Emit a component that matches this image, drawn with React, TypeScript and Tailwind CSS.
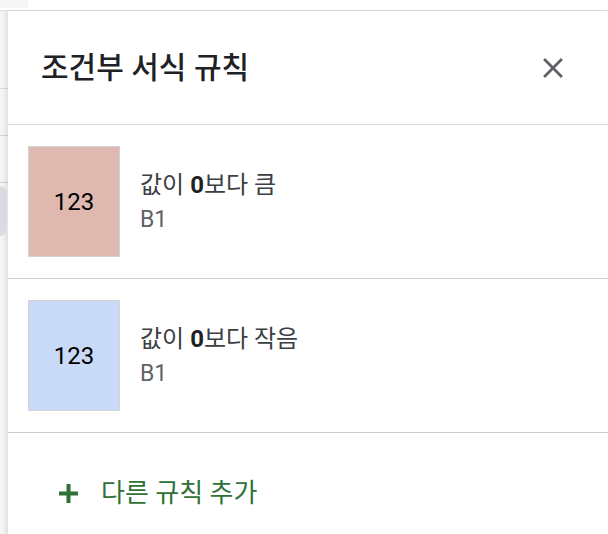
import React from 'react';

const rules = [
  { id: 1, swatch: 'bg-[#dfb9b0]', label: '0보다 큼', range: 'B1' },
  { id: 2, swatch: 'bg-[#c9daf8]', label: '0보다 작음', range: 'B1' },
];

function CloseIcon() {
  return (
    <svg width="34" height="34" viewBox="0 0 24 24" fill="#5f6368" aria-hidden="true">
      <path d="M19 6.41 17.59 5 12 10.59 6.41 5 5 6.41 10.59 12 5 17.59 6.41 19 12 13.41 17.59 19 19 17.59 13.41 12z" />
    </svg>
  );
}

function PlusIcon() {
  return (
    <svg width="19" height="19" viewBox="0 0 19 19" aria-hidden="true">
      <path d="M9.5 0v19M0 9.5h19" stroke="#2f7137" strokeWidth="4" />
    </svg>
  );
}

export default function App() {
  return (
    <div
      className="w-[608px] h-[534px] overflow-hidden bg-white"
      style={{ fontFamily: 'Roboto, "Noto Sans CJK KR", sans-serif' }}
    >
      {/* toolbar remnant */}
      <div className="h-[10px]">
        <div className="w-[28px] h-[8px] bg-[#f6f6f6]" />
      </div>

      <div className="flex border-t border-[#dadce0]">
        {/* sheet strip behind the panel */}
        <div className="w-[8px] shrink-0 bg-gradient-to-r from-[#f7f7f7] to-[#ececec]">
          <div className="h-[78px] border-b border-[#d6d6d6]" />
          <div className="h-[47px] border-b border-[#cfcfcf]" />
          <div className="h-[47px] border-b border-[#cfcfcf]" />
          <div className="mt-[3px] h-[50px] w-[6px] rounded-r-[6px] bg-[#d9dce1]" />
        </div>

        {/* side panel */}
        <div className="flex-1 flex flex-col bg-white shadow-[-2px_0_4px_rgba(0,0,0,0.06)]">
          <div className="h-[114px] flex items-center justify-between pl-[33px] pr-[38px] border-b border-[#dadce0]">
            <h1 className="text-[30px] font-medium text-[#202124]">조건부 서식 규칙</h1>
            <CloseIcon />
          </div>

          {rules.map((rule) => (
            <div
              key={rule.id}
              className="h-[154px] flex items-center gap-[20px] px-[20px] border-b border-[#cccccc]"
            >
              <div
                className={`w-[92px] h-[111px] shrink-0 flex items-center justify-center border border-[#d3d3d3] ${rule.swatch}`}
              >
                <span className="text-[24px] text-black">123</span>
              </div>
              <div className="flex flex-col">
                <span className="text-[24px] leading-[36px] text-[#3c4043]">
                  값이 <b className="font-bold text-[#202124]">0</b>
                  {rule.label.slice(1)}
                </span>
                <span className="text-[23px] leading-[34px] text-[#5f6368]">{rule.range}</span>
              </div>
            </div>
          ))}

          <div className="h-[120px] flex items-center pl-[51px] gap-[23px]">
            <PlusIcon />
            <span className="text-[26px] text-[#2f7137]">다른 규칙 추가</span>
          </div>
        </div>
      </div>
    </div>
  );
}
